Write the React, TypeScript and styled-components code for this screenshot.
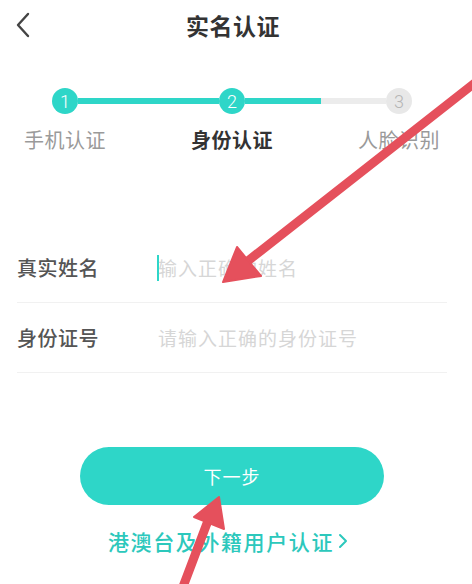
import React from "react";
import styled, { createGlobalStyle } from "styled-components";

const GlobalStyle = createGlobalStyle`
  html, body {
    margin: 0;
    padding: 0;
    background: #ffffff;
  }
  body {
    font-family: "Noto Sans CJK SC", "Noto Sans", sans-serif;
    color: #333;
  }
`;

const TEAL = "#2ed6c8";

const Page = styled.div`
  position: relative;
  width: 472px;
  height: 584px;
  overflow: hidden;
  background: #fff;
`;

const Header = styled.header`
  height: 50px;
  display: flex;
  align-items: center;
  justify-content: center;
  position: relative;
`;

const BackButton = styled.button`
  position: absolute;
  left: 10px;
  top: 10px;
  width: 26px;
  height: 30px;
  border: none;
  background: none;
  padding: 0;
  display: flex;
  align-items: center;
  justify-content: center;
`;

const Title = styled.h1`
  margin: 0 0 0 -6px;
  font-size: 23px;
  font-weight: 700;
  color: #333;
  letter-spacing: 0.5px;
`;

const Track = styled.div`
  display: flex;
  align-items: center;
  margin-top: 38px;
  padding-left: 52px;
`;

const Dot = styled.div<{ $done: boolean }>`
  width: 26px;
  height: 26px;
  border-radius: 50%;
  flex: none;
  display: flex;
  align-items: center;
  justify-content: center;
  background: ${(p) => (p.$done ? TEAL : "#e8e8e8")};
  color: ${(p) => (p.$done ? "#fff" : "#b5b5b5")};
  font-family: "Roboto", sans-serif;
  font-size: 18px;
  font-weight: 300;
`;

const Segment = styled.div<{ $fill: number }>`
  width: 141px;
  height: 6px;
  flex: none;
  background: linear-gradient(
    to right,
    ${TEAL} 0,
    ${TEAL} ${(p) => p.$fill}%,
    #ececec ${(p) => p.$fill}%,
    #ececec 100%
  );
`;

const Labels = styled.div`
  display: flex;
  gap: 47px;
  padding-left: 5px;
  margin-top: 12px;
`;

const StepLabel = styled.div<{ $active: boolean }>`
  width: 120px;
  text-align: center;
  font-size: 20px;
  line-height: 28px;
  letter-spacing: 0.5px;
  color: ${(p) => (p.$active ? "#333" : "#9a9a9a")};
  font-weight: ${(p) => (p.$active ? 700 : 400)};
`;

const Form = styled.form`
  margin: 79px 25px 0 17px;
`;

const Row = styled.div`
  height: 69px;
  display: flex;
  align-items: center;
  border-bottom: 1px solid #f1f1f1;
`;

const FieldLabel = styled.label`
  width: 140px;
  flex: none;
  font-size: 20px;
  font-weight: 500;
  color: #555;
  letter-spacing: 0.5px;
`;

const Caret = styled.span`
  width: 2px;
  height: 26px;
  background: ${TEAL};
  margin-right: -2px;
  flex: none;
`;

const Input = styled.input`
  flex: 1;
  border: none;
  outline: none;
  padding: 0 0 0 1px;
  font-family: inherit;
  font-size: 19px;
  letter-spacing: 1px;
  color: #333;
  background: transparent;
  &::placeholder {
    color: #d6d6d6;
  }
`;

const NextButton = styled.button`
  display: block;
  margin: 74px 0 0 80px;
  width: 304px;
  height: 58px;
  border: none;
  border-radius: 29px;
  background: ${TEAL};
  color: #fff;
  font-family: inherit;
  font-size: 18px;
  letter-spacing: 1px;
`;

const ForeignLink = styled.a`
  display: flex;
  align-items: center;
  gap: 4px;
  margin: 22px 0 0 108px;
  font-size: 21px;
  line-height: 28px;
  letter-spacing: 1.6px;
  color: #2cc8bc;
  font-weight: 500;
  text-decoration: none;
`;

const Overlay = styled.svg`
  position: absolute;
  inset: 0;
  pointer-events: none;
`;

const steps = ["手机认证", "身份认证", "人脸识别"];

export default function App() {
  return (
    <Page>
      <GlobalStyle />
      <Header>
        <BackButton aria-label="返回">
          <svg width="16" height="26" viewBox="0 0 16 26">
            <path d="M13 2 L3 13 L13 24" fill="none" stroke="#444" strokeWidth="2.4" strokeLinecap="round" strokeLinejoin="round" />
          </svg>
        </BackButton>
        <Title>实名认证</Title>
      </Header>

      <Track>
        <Dot $done>1</Dot>
        <Segment $fill={100} />
        <Dot $done>2</Dot>
        <Segment $fill={54} />
        <Dot $done={false}>3</Dot>
      </Track>
      <Labels>
        {steps.map((s, i) => (
          <StepLabel key={s} $active={i === 1}>{s}</StepLabel>
        ))}
      </Labels>

      <Form onSubmit={(e) => e.preventDefault()}>
        <Row>
          <FieldLabel>真实姓名</FieldLabel>
          <Caret />
          <Input placeholder="输入正确的姓名" />
        </Row>
        <Row>
          <FieldLabel>身份证号</FieldLabel>
          <Input placeholder="请输入正确的身份证号" />
        </Row>
      </Form>

      <NextButton>下一步</NextButton>
      <ForeignLink href="#">
        港澳台及外籍用户认证
        <svg width="10" height="16" viewBox="0 0 10 16">
          <path d="M2 2 L8 8 L2 14" fill="none" stroke="#2cc8bc" strokeWidth="2" strokeLinecap="round" strokeLinejoin="round" />
        </svg>
      </ForeignLink>

      <Overlay width="472" height="584" viewBox="0 0 472 584">
        <g fill="#e5505c" stroke="#e5505c" strokeLinejoin="round">
          <line x1="476" y1="82" x2="244" y2="264" strokeWidth="9" strokeLinecap="round" />
          <polygon points="223,282 237,247 261,276" strokeWidth="2" />
          <line x1="209" y1="518" x2="178" y2="600" strokeWidth="9" strokeLinecap="round" />
          <polygon points="219,497 194,517 224,529" strokeWidth="2" />
        </g>
      </Overlay>
    </Page>
  );
}
